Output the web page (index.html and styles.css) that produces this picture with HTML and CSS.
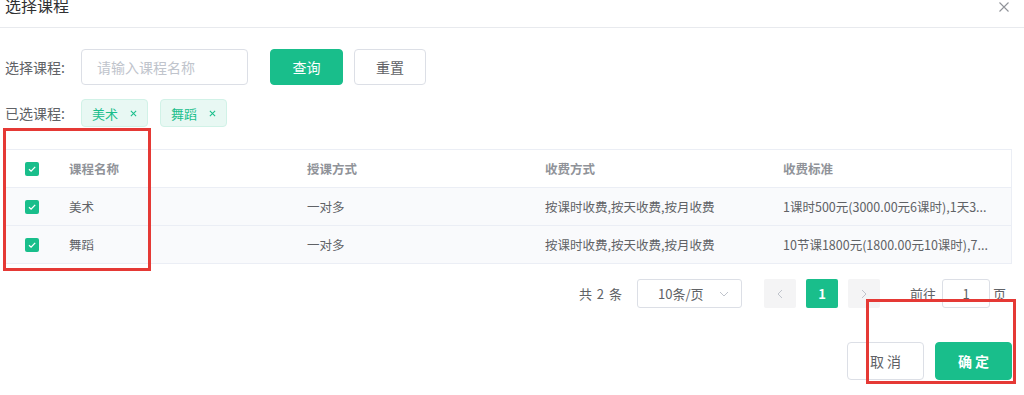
FILE: index.html
```html
<!DOCTYPE html>
<html lang="zh-CN">
<head>
<meta charset="utf-8">
<title>选择课程</title>
<link rel="stylesheet" href="styles.css">
</head>
<body>
<div class="dialog">
  <div class="dlg-header">
    <span class="dlg-title">选择课程</span>
    <svg class="dlg-close" width="10" height="10" viewBox="0 0 10 10"><path d="M0.5 0.5L9.5 9.5M9.5 0.5L0.5 9.5" stroke="#909399" stroke-width="1.1" fill="none"/></svg>
  </div>
  <div class="dlg-body">
    <div class="search-row">
      <span class="label">选择课程:</span>
      <div class="input"><span class="placeholder">请输入课程名称</span></div>
      <button class="btn btn-primary btn-query">查询</button>
      <button class="btn btn-default btn-reset">重置</button>
    </div>
    <div class="tag-row">
      <span class="label">已选课程:</span>
      <span class="tag">美术<svg class="tag-x" width="7" height="7" viewBox="0 0 8 8"><path d="M1 1L7 7M7 1L1 7" stroke="#19be8b" stroke-width="1.2" fill="none"/></svg></span>
      <span class="tag">舞蹈<svg class="tag-x" width="7" height="7" viewBox="0 0 8 8"><path d="M1 1L7 7M7 1L1 7" stroke="#19be8b" stroke-width="1.2" fill="none"/></svg></span>
    </div>
    <div class="table">
      <div class="tr th">
        <div class="td c0"><span class="cb"><svg width="14" height="14" viewBox="0 0 14 14"><path d="M4 7.2L6.1 9.2L10.2 4.9" stroke="#fff" stroke-width="1.3" fill="none"/></svg></span></div>
        <div class="td c1">课程名称</div>
        <div class="td c2">授课方式</div>
        <div class="td c3">收费方式</div>
        <div class="td c4">收费标准</div>
      </div>
      <div class="tr row">
        <div class="td c0"><span class="cb"><svg width="14" height="14" viewBox="0 0 14 14"><path d="M4 7.2L6.1 9.2L10.2 4.9" stroke="#fff" stroke-width="1.3" fill="none"/></svg></span></div>
        <div class="td c1">美术</div>
        <div class="td c2">一对多</div>
        <div class="td c3">按课时收费,按天收费,按月收费</div>
        <div class="td c4">1课时500元(3000.00元6课时),1天3...</div>
      </div>
      <div class="tr row">
        <div class="td c0"><span class="cb"><svg width="14" height="14" viewBox="0 0 14 14"><path d="M4 7.2L6.1 9.2L10.2 4.9" stroke="#fff" stroke-width="1.3" fill="none"/></svg></span></div>
        <div class="td c1">舞蹈</div>
        <div class="td c2">一对多</div>
        <div class="td c3">按课时收费,按天收费,按月收费</div>
        <div class="td c4">10节课1800元(1800.00元10课时),7...</div>
      </div>
    </div>
    <div class="pager">
      <span class="total">共 2 条</span>
      <div class="sizes"><span>10条/页</span><svg width="10" height="6" viewBox="0 0 10 6"><path d="M1 1L5 5L9 1" stroke="#c0c4cc" stroke-width="1" fill="none"/></svg></div>
      <span class="pbtn prev"><svg width="6" height="10" viewBox="0 0 6 10"><path d="M5 1L1 5L5 9" stroke="#c0c4cc" stroke-width="1" fill="none"/></svg></span>
      <span class="pbtn num active">1</span>
      <span class="pbtn next"><svg width="6" height="10" viewBox="0 0 6 10"><path d="M1 1L5 5L1 9" stroke="#c0c4cc" stroke-width="1" fill="none"/></svg></span>
      <span class="jump">前往</span>
      <div class="jump-input">1</div>
      <span class="jump-page">页</span>
    </div>
    <div class="footer">
      <button class="btn btn-default btn-foot">取 消</button>
      <button class="btn btn-primary btn-foot btn-ok">确 定</button>
    </div>
  </div>
  <div class="mark mark-a"></div>
  <div class="mark mark-b"></div>
</div>
</body>
</html>
```

FILE: styles.css
```css
* { box-sizing: border-box; }
html, body { margin: 0; padding: 0; background: #fff; }
body {
  font-family: "Microsoft YaHei", "Noto Sans CJK SC", "Noto Sans", sans-serif;
  color: #606266;
  font-size: 14px;
  width: 1024px;
  height: 395px;
  overflow: hidden;
}
.dialog { position: relative; width: 1024px; height: 395px; }
.dlg-header {
  height: 28px;
  border-bottom: 1px solid #e8eaee;
  display: flex;
  justify-content: space-between;
  align-items: flex-start;
  padding: 0 15px 0 5px;
}
.dlg-title {
  font-size: 16px;
  line-height: 16px;
  margin-top: -3px;
  color: #303133;
}
.dlg-close { margin-top: 2px; }
.dlg-body { padding: 0 12px 0 5px; }

.label { font-size: 14px; color: #606266; width: 76px; flex: none; white-space: nowrap; }

.search-row { display: flex; align-items: center; margin-top: 21px; height: 36px; }
.input {
  width: 167px; height: 36px;
  border: 1px solid #dcdfe6; border-radius: 4px;
  display: flex; align-items: center; padding-left: 15px;
}
.placeholder { color: #c0c4cc; font-size: 14px; }
.btn {
  font-family: inherit; font-size: 14px; border-radius: 4px; cursor: pointer;
  display: inline-flex; align-items: center; justify-content: center; padding: 0;
}
.btn-primary { background: #19be8b; border: 1px solid #19be8b; color: #fff; }
.btn-default { background: #fff; border: 1px solid #dcdfe6; color: #606266; }
.btn-query { width: 73px; height: 36px; margin-left: 22px; }
.btn-reset { width: 72px; height: 36px; margin-left: 11px; }

.tag-row { display: flex; align-items: center; margin-top: 14px; height: 28px; }
.tag {
  display: inline-flex; align-items: center;
  height: 28px; padding: 0 10px 0 10px;
  background: #e8f8f3; border: 1px solid #d1f2e7; border-radius: 4px;
  color: #19be8b; font-size: 13px; margin-right: 12px;
}
.tag-x { margin-left: 12px; }

.table {
  margin-top: 22px;
  border-top: 1px solid #ebeef5;
  border-right: 1px solid #ebeef5;
  width: 1007px;
}
.tr { display: flex; height: 38px; border-bottom: 1px solid #ebeef5; }
.row { background: #f9fafc; }
.td {
  display: flex; align-items: center;
  padding-left: 14px; font-size: 12.5px; color: #606266;
  white-space: nowrap; overflow: hidden;
}
.th .td { color: #909399; font-weight: bold; }
.c0 { width: 50px; padding-left: 20px; }
.c1, .c2, .c3 { width: 238px; }
.c4 { flex: 1; }
.cb {
  width: 14px; height: 14px; border-radius: 2px; background: #19be8b;
  display: inline-flex;
}

.pager {
  display: flex; align-items: center; justify-content: flex-end;
  margin-top: 15px; height: 29px; padding-right: 6px;
  font-size: 13px; color: #606266;
}
.total { margin-right: 15px; word-spacing: 2px; }
.sizes {
  width: 105px; height: 29px; border: 1px solid #dcdfe6; border-radius: 3px;
  display: flex; align-items: center; justify-content: space-between;
  padding: 0 12px 0 20px; font-size: 13px;
}
.pbtn {
  width: 32px; height: 29px; border-radius: 2px; background: #f4f4f5;
  display: inline-flex; align-items: center; justify-content: center;
  font-weight: bold; font-size: 13px;
}
.prev { margin-left: 22px; }
.num { margin-left: 10px; }
.next { margin-left: 10px; }
.active { background: #19be8b; color: #fff; }
.jump { margin-left: 30px; }
.jump-input {
  width: 48px; height: 29px; border: 1px solid #dcdfe6; border-radius: 3px;
  margin-left: 6px; display: flex; align-items: center; justify-content: center;
}
.jump-page { margin-left: 3px; }

.footer { display: flex; justify-content: flex-end; margin-top: 34px; }
.btn-foot { width: 77px; height: 38px; }
.btn-ok { margin-left: 11px; font-weight: bold; }

.mark { position: absolute; border: 3px solid #e53935; pointer-events: none; }
.mark-a { left: 3px; top: 128px; width: 148px; height: 143px; }
.mark-b { left: 866px; top: 299px; width: 150px; height: 85px; }
```
